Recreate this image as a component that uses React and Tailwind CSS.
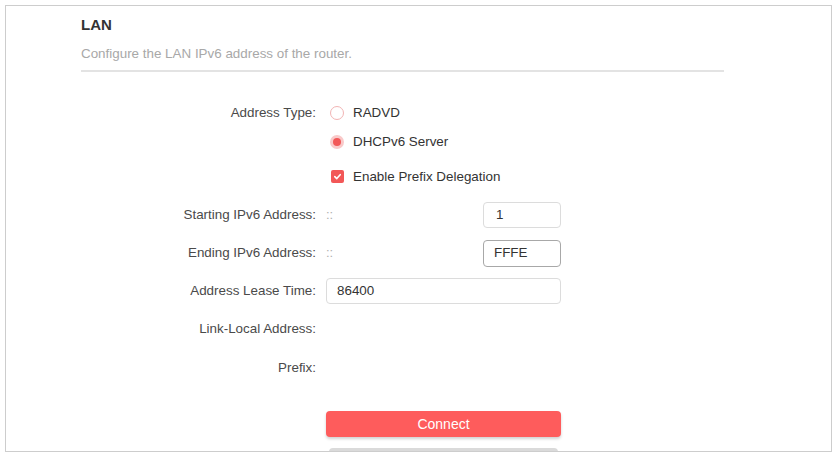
import React from "react";

function Label({ children }) {
  return (
    <div className="w-[235px] shrink-0 text-right text-[13.4px] text-[#4a4a4a]">{children}</div>
  );
}

function Row({ className = "", label, children }) {
  return (
    <div className={`flex items-center ${className}`}>
      <Label>{label}</Label>
      <div className="ml-[10px] w-[235px] flex items-center">{children}</div>
    </div>
  );
}

export default function App() {
  return (
    <div
      className="w-[837px] h-[459px] bg-white pt-[5px] pl-[5px]"
      style={{ fontFamily: '"Liberation Sans", Arial, sans-serif' }}
    >
      <div className="w-[827px] h-[447px] border border-[#cdcdcd] overflow-hidden bg-white">
        <div className="pl-[75px]">
          <div className="pt-[9px] h-[35px] text-[15px] leading-[20px] font-bold text-[#333]">LAN</div>
          <div className="h-[29px] pt-[4px] text-[13.4px] leading-[18px] text-[#a8a8a8]">
            Configure the LAN IPv6 address of the router.
          </div>
          <div className="w-[643px] h-[2px] bg-[#e3e3e3]"></div>

          <div className="pt-[29px]">
            <Row className="h-[24px]" label="Address Type:">
              <span className="w-[14px] h-[14px] rounded-full border border-[#f2b4b4] bg-white mt-[1px] ml-[4px]"></span>
              <span className="ml-[9px] text-[13.4px] text-[#333]">RADVD</span>
            </Row>
            <Row className="h-[24px] mt-[5px]" label="">
              <span className="w-[14px] h-[14px] rounded-full bg-[#f9c9c9] flex items-center justify-center ml-[4px]">
                <span className="w-[8px] h-[8px] rounded-full bg-[#f25757]"></span>
              </span>
              <span className="ml-[9px] text-[13.4px] text-[#333]">DHCPv6 Server</span>
            </Row>
            <Row className="h-[24px] mt-[11px]" label="">
              <span className="ml-[5px] w-[13px] h-[13px] rounded-[2px] bg-[#f25757] flex items-center justify-center">
                <svg width="9" height="9" viewBox="0 0 10 10">
                  <path d="M2 5.2 L4.2 7.3 L8 3" fill="none" stroke="white" strokeWidth="1.8" strokeLinecap="round" strokeLinejoin="round" />
                </svg>
              </span>
              <span className="ml-[9px] text-[13.4px] text-[#333]">Enable Prefix Delegation</span>
            </Row>

            <Row className="h-[26px] mt-[13px]" label="Starting IPv6 Address:">
              <span className="text-[13px] text-[#b0b0b0]">::</span>
              <div className="ml-auto w-[78px] h-[26px] rounded-[4px] border border-[#dcdcdc] flex items-center pl-[12px] text-[13.4px] text-[#333]">1</div>
            </Row>
            <Row className="h-[26px] mt-[12px]" label="Ending IPv6 Address:">
              <span className="text-[13px] text-[#b0b0b0]">::</span>
              <div className="ml-auto w-[78px] h-[27px] rounded-[4px] border border-[#a8a8a8] flex items-center pl-[10px] text-[13.4px] text-[#333]">FFFE</div>
            </Row>
            <Row className="h-[26px] mt-[12px]" label="Address Lease Time:">
              <div className="w-[235px] h-[26px] rounded-[4px] border border-[#dcdcdc] flex items-center pl-[10px] text-[13.4px] text-[#333]">86400</div>
            </Row>
            <Row className="h-[24px] mt-[13px]" label="Link-Local Address:"></Row>
            <Row className="h-[24px] mt-[15px]" label="Prefix:"></Row>

            <Row className="h-[26px] mt-[31px]" label="">
              <div className="w-[235px] h-[26px] rounded-[4px] bg-[#fe5c5c] shadow-[0_2px_3px_rgba(0,0,0,0.18)] flex items-center justify-center text-[14px] text-white">Connect</div>
            </Row>
            <Row className="h-[26px] mt-[11px]" label="">
              <div className="ml-[3px] w-[229px] h-[26px] rounded-[4px] bg-[#dadada]"></div>
            </Row>
          </div>
        </div>
      </div>
    </div>
  );
}
